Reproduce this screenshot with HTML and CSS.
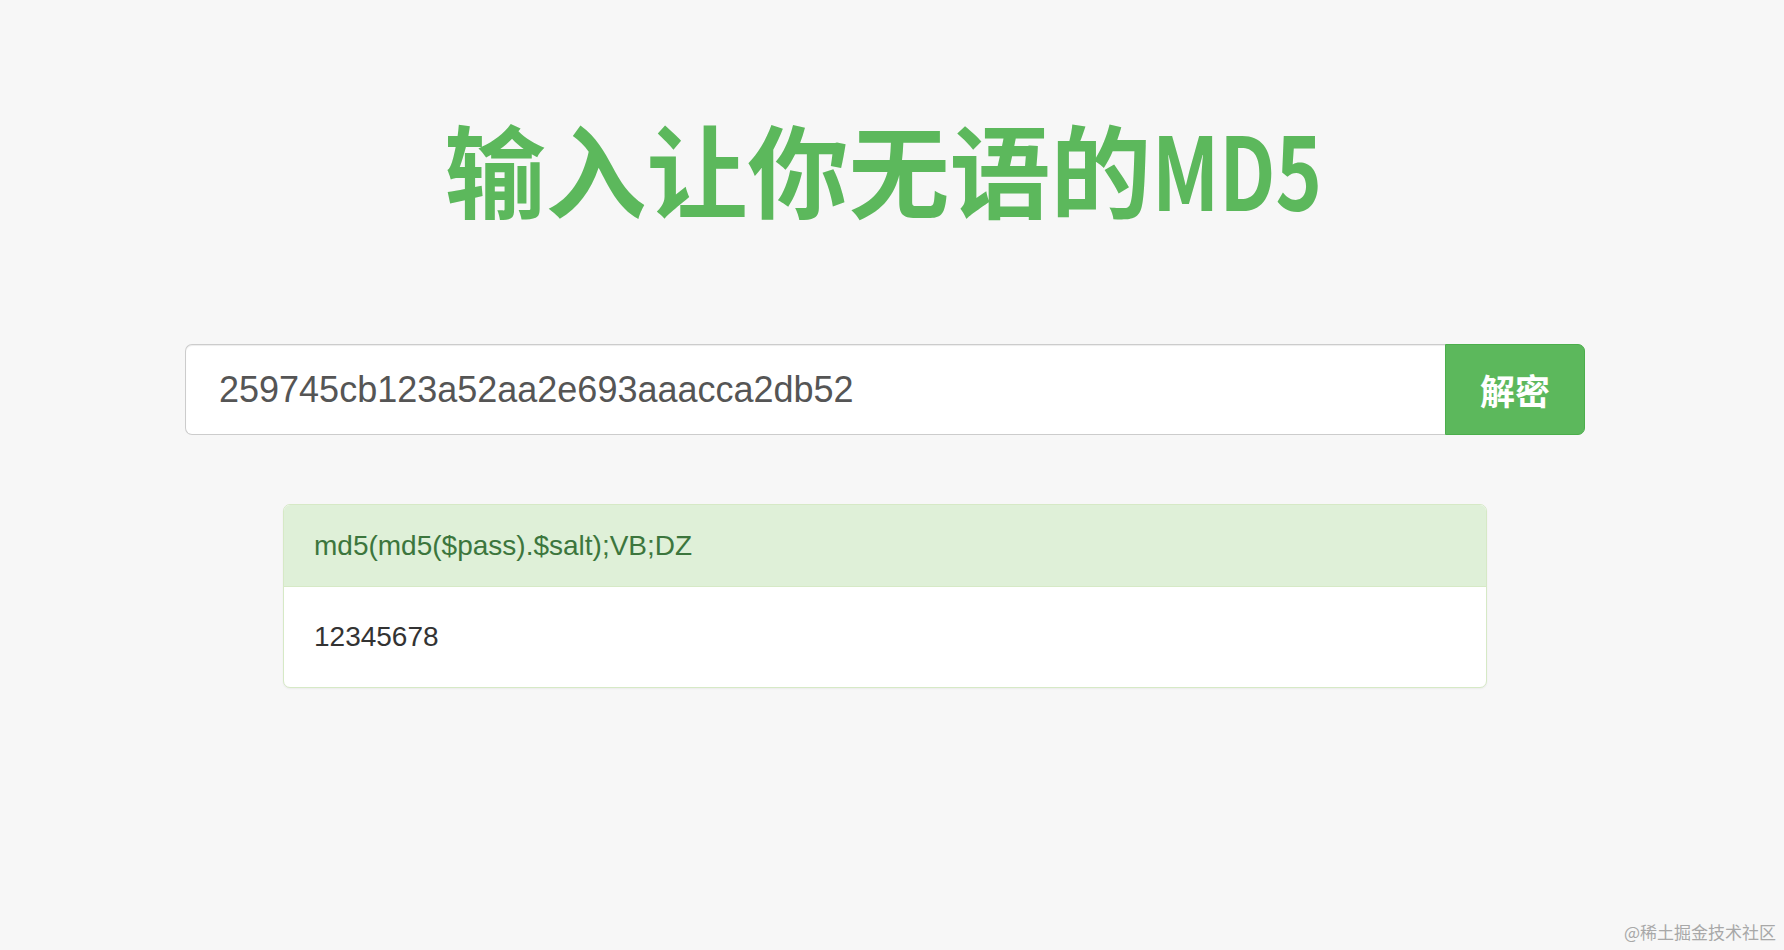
FILE: index.html
```html
<!DOCTYPE html>
<html lang="zh-CN">
<head>
  <meta charset="UTF-8" />
  <meta name="viewport" content="width=device-width, initial-scale=1.0"/>
  <title>MD5 解密</title>
  <link rel="stylesheet" href="styles.css">
</head>
<body>

  <div class="page">
    <h1 class="title">输入让你无语的<span class="title-latin">MD5</span></h1>

    <!-- 输入框和按钮 -->
    <form class="search" onsubmit="return false;">
      <input type="text" class="search-input" value="259745cb123a52aa2e693aaacca2db52">
      <button type="submit" class="search-btn">解密</button>
    </form>

    <!-- 结果 -->
    <div class="result">
      <div class="result-heading">md5(md5($pass).$salt);VB;DZ</div>
      <div class="result-body">12345678</div>
    </div>
  </div>

  <div class="watermark">@稀土掘金技术社区</div>

</body>
</html>
```

FILE: styles.css
```css
body {
  margin: 0;
  padding-right: 14px;
  background-color: #f7f7f7;
  font-family: "Liberation Sans", Arial, "Noto Sans CJK SC", sans-serif;
  color: #333;
  min-height: 950px;
  box-sizing: border-box;
}

.page {
  padding-top: 117px;
}

.title {
  margin: 0;
  text-align: center;
  font-family: "Noto Sans CJK SC", sans-serif;
  font-size: 101px;
  line-height: 100px;
  font-weight: bold;
  color: #5cb85c;
}

/* MD5 is narrower in the original font */
.title-latin {
  display: inline-block;
  transform: scaleX(0.78);
  transform-origin: left center;
  margin-right: -44px;
}

.search {
  display: flex;
  width: 1400px;
  height: 91px;
  margin: 127px auto 0 auto;
}

.search-input {
  flex: 1;
  height: 91px;
  box-sizing: border-box;
  padding: 0 33px;
  font-family: "Liberation Sans", Arial, sans-serif;
  font-size: 36px;
  color: #555;
  background-color: #fff;
  border: 1px solid #ccc;
  border-right: 0;
  border-radius: 7px 0 0 7px;
  box-shadow: inset 0 1px 1px rgba(0, 0, 0, 0.075);
  outline: none;
}

.search-btn {
  width: 140px;
  height: 91px;
  box-sizing: border-box;
  background-color: #5cb85c;
  border: 1px solid #4cae4c;
  border-radius: 0 7px 7px 0;
  color: #fff;
  font-family: "Noto Sans CJK SC", sans-serif;
  font-size: 35px;
  font-weight: bold;
  cursor: pointer;
}

.result {
  width: 1204px;
  margin: 69px auto 0 auto;
  background-color: #fff;
  border: 1px solid #d6e9c6;
  border-radius: 7px;
  box-shadow: 0 1px 2px rgba(0, 0, 0, 0.05);
  box-sizing: border-box;
}

.result-heading {
  padding: 20px 30px;
  line-height: 41px;
  font-size: 28px;
  color: #3c763d;
  background-color: #dff0d8;
  border-bottom: 1px solid #d6e9c6;
  border-radius: 6px 6px 0 0;
}

.result-body {
  padding: 30px;
  line-height: 40px;
  font-size: 28px;
  color: #333;
}

.watermark {
  position: absolute;
  right: 8px;
  bottom: 6px;
  font-family: "Noto Sans CJK SC", sans-serif;
  font-size: 17px;
  color: #a8a8a8;
}
```
